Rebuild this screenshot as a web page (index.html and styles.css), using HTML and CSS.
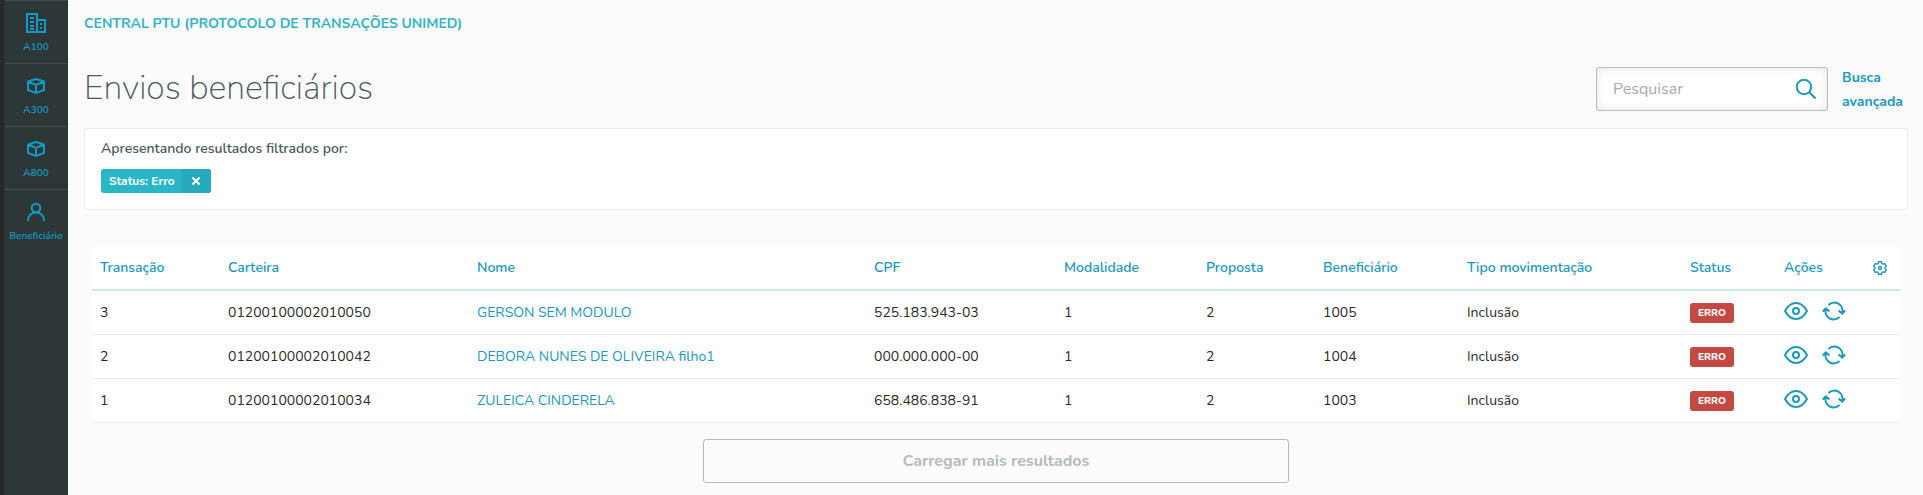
FILE: index.html
```
<!DOCTYPE html>
<html lang="pt-br">
<head>
    <meta charset="UTF-8">
    <meta name="viewport" content="width=device-width, initial-scale=1.0">
    <title>Envios beneficiários</title>
    <link rel="stylesheet" href="styles.css">
</head>
<body>
    <!-- símbolos usados na página -->
    <svg class="sprite" aria-hidden="true">
        <symbol id="i-building" viewBox="0 0 20 20">
            <path d="M1 1h10v18H1zM11 7h8v12h-8M4 5h4M4 9h4M4 13h4M4 16h4M14 11h2M14 15h2"/>
        </symbol>
        <symbol id="i-box" viewBox="0 0 20 20">
            <path d="M10 3l8 2.500v8.500l-8 3-8-3V5.500zM2 5.500L10 9l8-3.500M10 9v8"/>
        </symbol>
        <symbol id="i-user" viewBox="0 0 20 20">
            <circle cx="10" cy="6" r="4.3"/>
            <path d="M2 19c0-5 3-8.500 8-8.500s8 3.500 8 8.500"/>
        </symbol>
        <symbol id="i-search" viewBox="0 0 20 20">
            <circle cx="8" cy="8" r="7.200"/>
            <path d="M13 13l6.500 6.500"/>
        </symbol>
        <symbol id="i-eye" viewBox="0 0 24 20">
            <path d="M1 10c3-5.500 6.500-8 11-8s8 2.500 11 8c-3 5.500-6.500 8-11 8s-8-2.500-11-8z"/>
            <circle cx="12" cy="10" r="3"/>
        </symbol>
        <symbol id="i-refresh" viewBox="0 0 24 20">
            <path d="M6.500 4A8.200 8.200 0 0 1 20.200 12M17.500 16A8.200 8.200 0 0 1 3.800 8M.8 10.500l3-3.200 3.600 3.200M16.600 9.500l3.600 3.200 3-3.200"/>
        </symbol>
        <symbol id="i-gear" viewBox="0 0 14 14">
            <path stroke-width="1.4" stroke-linejoin="round" d="M5.600.8h2.800l.5 1.700 1.200.7 1.700-.5 1.400 2.500L12 6.400v1.200l1.200 1.200-1.400 2.500-1.700-.5-1.200.7-.5 1.700H5.600l-.5-1.700-1.200-.7-1.700.5L.8 8.800 2 7.600V6.400L.8 5.200l1.400-2.500 1.700.5 1.200-.7z"/>
            <circle stroke-width="1.4" cx="7" cy="7" r="1.500"/>
        </symbol>
        <symbol id="i-close" viewBox="0 0 10 10">
            <path d="M1.500 1.500l7 7M8.500 1.500l-7 7"/>
        </symbol>
    </svg>

    <div class="layout">
        <!-- menu lateral -->
        <nav class="sidebar">
            <a href="#" class="menu-item"><svg class="icon"><use href="#i-building"/></svg>A100</a>
            <a href="#" class="menu-item"><svg class="icon"><use href="#i-box"/></svg>A300</a>
            <a href="#" class="menu-item"><svg class="icon"><use href="#i-box"/></svg>A800</a>
            <a href="#" class="menu-item"><svg class="icon"><use href="#i-user"/></svg>Beneficiário</a>
        </nav>

        <main class="content">
            <a href="#" class="breadcrumb">CENTRAL PTU (PROTOCOLO DE TRANSAÇÕES UNIMED)</a>

            <div class="page-header">
                <h1>Envios beneficiários</h1>
                <form class="search">
                    <div class="search-box">
                        <input type="text" class="search-input" placeholder="Pesquisar" aria-label="Pesquisar">
                        <button type="button" class="search-btn" aria-label="Buscar"><svg class="icon"><use href="#i-search"/></svg></button>
                    </div>
                    <a href="#" class="advanced">Busca avançada</a>
                </form>
            </div>

            <!-- filtros aplicados -->
            <section class="filters">
                <p class="filters-title">Apresentando resultados filtrados por:</p>
                <div class="tag">
                    <span class="tag-text">Status: Erro</span>
                    <button type="button" class="tag-close" aria-label="Remover filtro"><svg class="icon"><use href="#i-close"/></svg></button>
                </div>
            </section>

            <table class="results">
                <colgroup>
                    <col class="col-transacao">
                    <col class="col-carteira">
                    <col class="col-nome">
                    <col class="col-cpf">
                    <col class="col-modalidade">
                    <col class="col-proposta">
                    <col class="col-beneficiario">
                    <col class="col-tipo">
                    <col class="col-status">
                    <col class="col-acoes">
                    <col class="col-config">
                </colgroup>
                <thead>
                    <tr>
                        <th>Transação</th>
                        <th>Carteira</th>
                        <th>Nome</th>
                        <th>CPF</th>
                        <th>Modalidade</th>
                        <th>Proposta</th>
                        <th>Beneficiário</th>
                        <th>Tipo movimentação</th>
                        <th>Status</th>
                        <th>Ações</th>
                        <th><button type="button" class="config" aria-label="Configurar colunas"><svg class="icon"><use href="#i-gear"/></svg></button></th>
                    </tr>
                </thead>
                <tbody>
                    <tr>
                        <td>3</td>
                        <td>01200100002010050</td>
                        <td><a href="#">GERSON SEM MODULO</a></td>
                        <td>525.183.943-03</td>
                        <td>1</td>
                        <td>2</td>
                        <td>1005</td>
                        <td>Inclusão</td>
                        <td><span class="badge">ERRO</span></td>
                        <td colspan="2">
                            <div class="actions">
                                <button type="button" aria-label="Visualizar"><svg class="icon"><use href="#i-eye"/></svg></button>
                                <button type="button" aria-label="Reprocessar"><svg class="icon"><use href="#i-refresh"/></svg></button>
                            </div>
                        </td>
                    </tr>
                    <tr>
                        <td>2</td>
                        <td>01200100002010042</td>
                        <td><a href="#">DEBORA NUNES DE OLIVEIRA filho1</a></td>
                        <td>000.000.000-00</td>
                        <td>1</td>
                        <td>2</td>
                        <td>1004</td>
                        <td>Inclusão</td>
                        <td><span class="badge">ERRO</span></td>
                        <td colspan="2">
                            <div class="actions">
                                <button type="button" aria-label="Visualizar"><svg class="icon"><use href="#i-eye"/></svg></button>
                                <button type="button" aria-label="Reprocessar"><svg class="icon"><use href="#i-refresh"/></svg></button>
                            </div>
                        </td>
                    </tr>
                    <tr>
                        <td>1</td>
                        <td>01200100002010034</td>
                        <td><a href="#">ZULEICA CINDERELA</a></td>
                        <td>658.486.838-91</td>
                        <td>1</td>
                        <td>2</td>
                        <td>1003</td>
                        <td>Inclusão</td>
                        <td><span class="badge">ERRO</span></td>
                        <td colspan="2">
                            <div class="actions">
                                <button type="button" aria-label="Visualizar"><svg class="icon"><use href="#i-eye"/></svg></button>
                                <button type="button" aria-label="Reprocessar"><svg class="icon"><use href="#i-refresh"/></svg></button>
                            </div>
                        </td>
                    </tr>
                </tbody>
            </table>

            <button type="button" class="load-more">Carregar mais resultados</button>
        </main>
    </div>
</body>
</html>
```
FILE: styles.css
```
*{
    box-sizing: border-box;
}

body{
    margin: 0;
    background-color: #fbfbfb;
    color: #2b2b2b;
    font-family: "Nunito", "Open Sans", sans-serif;
    font-size: 14px;
    line-height: 24px;
}

a{
    color: #1a98bf;
    text-decoration: none;
}

button{
    background: none;
    border: none;
    color: #1a98bf;
    cursor: pointer;
    font-family: inherit;
    padding: 0;
}

.sprite{
    display: none;
}

.icon{
    display: block;
    fill: none;
    height: 20px;
    stroke: currentColor;
    stroke-width: 2;
    width: 20px;
}

.layout{
    display: flex;
    min-height: 100vh;
}

/* menu lateral */
.sidebar{
    background-color: #2d3738;
    border-left: 4px solid #272727;
    flex: none;
    width: 68px;
}
.menu-item{
    align-items: center;
    border-top: 1px solid #414b4c;
    color: #129bc4;
    display: flex;
    flex-direction: column;
    font-size: 10px;
    font-weight: 600;
    gap: 4px;
    height: 63px;
    line-height: 20px;
    margin: 0 1px;
    padding-top: 12px;
}

.content{
    flex: 1;
    min-width: 0;
    padding: 12px 15px 11px 16px;
}
.breadcrumb{
    color: #33b5c5;
    display: block;
    font-weight: 700;
}

/* titulo e busca */
.page-header{
    align-items: center;
    display: flex;
    justify-content: space-between;
    padding: 28px 0 14px;
}
h1{
    color: #4a5a5c;
    font-size: 34px;
    font-weight: 200;
    line-height: 46px;
    margin: 0 0 2px;
}
.search{
    align-items: center;
    display: flex;
    gap: 14px;
}
.search-box{
    align-items: center;
    background-color: #fff;
    border: 1px solid #b3bcbc;
    border-radius: 3px;
    box-shadow: inset 0 0 10px #e4e4e4;
    display: flex;
    height: 44px;
    padding: 0 11px 0 16px;
    width: 232px;
}
.search-input{
    background: none;
    border: none;
    flex: 1;
    font-family: inherit;
    font-size: 16px;
    min-width: 0;
    outline: none;
    padding: 0;
}
.search-input::placeholder{
    color: #a5abab;
}
.advanced{
    font-weight: 700;
    padding-top: 2px;
    width: 66px;
}

/* filtros */
.filters{
    background-color: #fff;
    border: 1px solid #ebebeb;
    border-radius: 3px;
    padding: 8px 16px 16px;
}
.filters-title{
    color: #4a5a5c;
    font-weight: 600;
    margin: 0 0 8px;
}
.tag{
    background-color: #2ab6c6;
    border-radius: 3px;
    color: #fff;
    display: inline-flex;
    font-size: 12px;
    font-weight: 700;
    overflow: hidden;
    vertical-align: top;
}
.tag-text{
    padding: 0 6px 0 8px;
}
.tag-close{
    background-color: #27aabb;
    color: #fff;
    padding: 0 10px;
}
.tag-close .icon{
    height: 10px;
    width: 10px;
}

/* tabela */
.results{
    background-color: #fff;
    border-collapse: collapse;
    margin: 36px auto 16px;
    table-layout: fixed;
    width: calc(100% - 16px);
}
.results th, .results td{
    padding: 1px 8px 0;
    text-align: left;
    white-space: nowrap;
}
.results th{
    border-bottom: 2px solid #c9e9f1;
    color: #1a98bf;
    font-weight: 600;
    height: 44px;
}
.results td{
    border-bottom: 1px solid #ebebeb;
    height: 44px;
}
.col-transacao{ width: 128px; }
.col-carteira{ width: 249px; }
.col-nome{ width: 397px; }
.col-cpf{ width: 190px; }
.col-modalidade{ width: 142px; }
.col-proposta{ width: 117px; }
.col-beneficiario{ width: 144px; }
.col-tipo{ width: 223px; }
.col-status{ width: 94px; }
.col-acoes{ width: 89px; }
.col-config{ width: 35px; }

.config{
    display: block;
}
.config .icon{
    height: 14px;
    width: 14px;
}
.badge{
    background-color: #c64842;
    border-radius: 3px;
    color: #fff;
    display: block;
    font-size: 10px;
    font-weight: 800;
    line-height: 20px;
    text-align: center;
    width: 44px;
}
.actions{
    display: flex;
    gap: 14px;
    padding-bottom: 3px;
}
.actions .icon{
    width: 24px;
}

.load-more{
    border: 1px solid #b3bcbc;
    border-radius: 3px;
    color: #b3bcbc;
    display: block;
    font-size: 16px;
    font-weight: 700;
    height: 44px;
    margin: 0 auto;
    width: calc(100% / 3 - 22px);
}
```
